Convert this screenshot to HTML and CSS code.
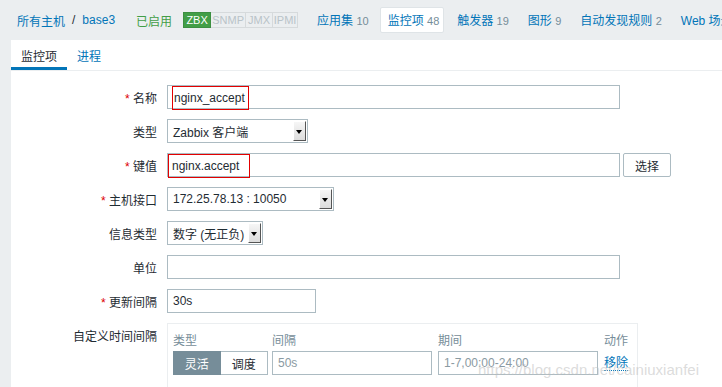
FILE: index.html
```html
<!DOCTYPE html>
<html lang="zh">
<head>
    <meta charset="UTF-8">
    <title>监控项</title>
    <link rel="stylesheet" href="styles.css">
</head>
<body>
    <div class="host-nav">
        <a class="crumb">所有主机</a>
        <span class="sep">/</span>
        <a class="crumb">base3</a>
        <span class="status">已启用</span>
        <div class="badges">
            <span class="badge on">ZBX</span><span class="badge b-snmp">SNMP</span><span class="badge b-jmx">JMX</span><span class="badge b-ipmi">IPMI</span>
        </div>
        <a class="nav-item">应用集 <span class="count">10</span></a>
        <a class="nav-item selected">监控项 <span class="count">48</span></a>
        <a class="nav-item">触发器 <span class="count">19</span></a>
        <a class="nav-item">图形 <span class="count">9</span></a>
        <a class="nav-item">自动发现规则 <span class="count">2</span></a>
        <a class="nav-item">Web 场景</a>
    </div>

    <div class="panel">
        <ul class="tabs">
            <li class="active">监控项</li>
            <li>进程</li>
        </ul>

        <div class="form">
            <div class="row">
                <label><span class="req">*</span> 名称</label>
                <div class="field wide"><span class="mark mark-name">nginx_accept</span></div>
            </div>
            <div class="row">
                <label>类型</label>
                <div class="select w-type"><span>Zabbix 客户端</span><i class="arrow"></i></div>
            </div>
            <div class="row">
                <label><span class="req">*</span> 键值</label>
                <div class="field wide"><span class="mark mark-key">nginx.accept</span></div>
                <button class="btn">选择</button>
            </div>
            <div class="row">
                <label><span class="req">*</span> 主机接口</label>
                <div class="select w-iface"><span>172.25.78.13 : 10050</span><i class="arrow"></i></div>
            </div>
            <div class="row">
                <label>信息类型</label>
                <div class="select w-info"><span>数字 (无正负)</span><i class="arrow"></i></div>
            </div>
            <div class="row">
                <label>单位</label>
                <div class="field wide"></div>
            </div>
            <div class="row">
                <label><span class="req">*</span> 更新间隔</label>
                <div class="field short"><span>30s</span></div>
            </div>
            <div class="row">
                <label class="top">自定义时间间隔</label>
                <div class="intervals">
                    <div class="int-head">
                        <span class="c-type">类型</span>
                        <span class="c-int">间隔</span>
                        <span class="c-period">期间</span>
                        <span class="c-act">动作</span>
                    </div>
                    <div class="int-row">
                        <div class="seg c-type"><span class="on">灵活</span><span>调度</span></div>
                        <div class="field c-int"><span class="ph">50s</span></div>
                        <div class="field c-period"><span class="ph">1-7,00:00-24:00</span></div>
                        <a class="remove c-act">移除</a>
                    </div>
                </div>
            </div>
        </div>
    </div>

    <div class="watermark">https://blog.csdn.net/cainiuxianfei</div>
</body>
</html>
```

FILE: styles.css
```css
* {
    box-sizing: border-box;
    margin: 0;
    padding: 0;
}

body {
    background-color: #ebeef0;
    color: #1f2c33;
    font-family: "Liberation Sans", "Noto Sans CJK SC", sans-serif;
    font-size: 12px;
    overflow: hidden;
    height: 387px;
    position: relative;
}

a {
    color: #0275b8;
    text-decoration: none;
}

/* host navigation */
.host-nav {
    height: 40px;
    display: flex;
    align-items: center;
    padding-left: 17px;
    white-space: nowrap;
}

.sep {
    margin: 0 7px 0 7px;
    color: #1f2c33;
}

.status {
    color: #429e47;
    margin-left: 21px;
}

.badges {
    display: flex;
    margin-left: 11px;
    margin-right: 11px;
}

.badge {
    height: 16px;
    line-height: 14px;
    text-align: center;
    border: 1px solid #d6dadc;
    border-left: none;
    color: #b9c3c8;
    font-size: 11px;
}

.badge.on {
    width: 28px;
    background: #429e47;
    border: 1px solid #3c8f41;
    color: #fff;
}

.b-snmp { width: 35px; }
.b-jmx { width: 27px; }
.b-ipmi { width: 25px; }

.nav-item {
    padding: 3px 7px 4px;
    margin-right: 3px;
    border: 1px solid transparent;
}

.nav-item .count {
    color: #768d99;
    font-size: 11px;
}

.nav-item.selected {
    background: #fff;
    border: 1px solid #dfe4e7;
    border-radius: 2px;
    padding-right: 4px;
    margin-right: 5px;
}

/* panel */
.panel {
    margin-left: 11px;
    background: #fff;
    height: 347px;
}

.tabs {
    list-style: none;
    display: flex;
    height: 31px;
    border-bottom: 1px solid #ebeef0;
}

.tabs li {
    padding: 7px 10px 0;
    color: #0275b8;
}

.tabs li.active {
    color: #1f2c33;
    border-bottom: 3px solid #0275b8;
}

.form {
    padding-top: 14px;
}

.row {
    display: flex;
    align-items: center;
    margin-bottom: 10px;
}

.row label {
    width: 146px;
    text-align: right;
    margin-right: 10px;
}

.row label.top {
    align-self: flex-start;
    padding-top: 4px;
}

.req {
    color: #dc0000;
}

.field {
    height: 24px;
    border: 1px solid #acbbc2;
    background: #fff;
    display: flex;
    align-items: center;
    padding-left: 5px;
}

.field.wide {
    width: 453px;
}

.field.short {
    width: 149px;
}

.mark {
    border: 1px solid #e30000;
    height: 24px;
    line-height: 22px;
    margin-top: 2px;
    padding-left: 1px;
}

.mark-name {
    width: 77px;
    margin-left: -1px;
}

.mark-key {
    width: 82px;
    margin-left: -5px;
    padding-left: 3px;
    margin-top: 1px;
}

.btn {
    margin-left: 3px;
    height: 24px;
    width: 48px;
    border: 1px solid #acbbc2;
    border-radius: 2px;
    background: #fff;
    color: #1f2c33;
    font-family: inherit;
    font-size: 12px;
}

.select {
    height: 24px;
    border: 1px solid #acbbc2;
    display: flex;
    align-items: center;
    justify-content: space-between;
    padding: 0 1px 0 5px;
    white-space: nowrap;
}

.w-type { width: 141px; }
.w-iface { width: 167px; }
.w-info { width: 96px; }

.arrow {
    width: 13px;
    height: 20px;
    flex-shrink: 0;
    background: linear-gradient(#f6f6f6, #dcdcdc);
    border-right: 1px solid #555;
    border-bottom: 1px solid #555;
    border-top: 1px solid #fff;
    border-left: 1px solid #fff;
    position: relative;
}

.arrow::after {
    content: "";
    position: absolute;
    left: 2px;
    top: 8px;
    border-left: 3.5px solid transparent;
    border-right: 3.5px solid transparent;
    border-top: 4px solid #000;
}

/* custom intervals */
.intervals {
    width: 471px;
    height: 70px;
    border: 1px solid #ebeef0;
    padding: 4px 5px 0;
}

.int-head,
.int-row {
    display: flex;
}

.int-head {
    color: #768d99;
    height: 23px;
    align-items: center;
}

.int-row {
    align-items: center;
}

.int-head span,
.int-row > * {
    flex-shrink: 0;
}

.c-type {
    width: 99px;
}

.c-int {
    width: 160px;
    margin-right: 6px;
}

.c-period {
    width: 160px;
    margin-right: 6px;
}

.ph {
    color: #8a9aa2;
}

.seg {
    display: flex;
    height: 24px;
}

.seg span {
    width: 48px;
    display: flex;
    align-items: center;
    justify-content: center;
    border: 1px solid #acbbc2;
    border-left: none;
}

.seg span.on {
    background: #768d99;
    color: #fff;
    border: 1px solid #768d99;
}

.int-row .seg {
    width: 95px;
    margin-right: 4px;
}

.remove {
    border-bottom: 1px dotted #0275b8;
    line-height: 14px;
}

.watermark {
    position: absolute;
    left: 478px;
    top: 361px;
    font-size: 15px;
    color: rgba(190, 190, 190, 0.55);
}
```
